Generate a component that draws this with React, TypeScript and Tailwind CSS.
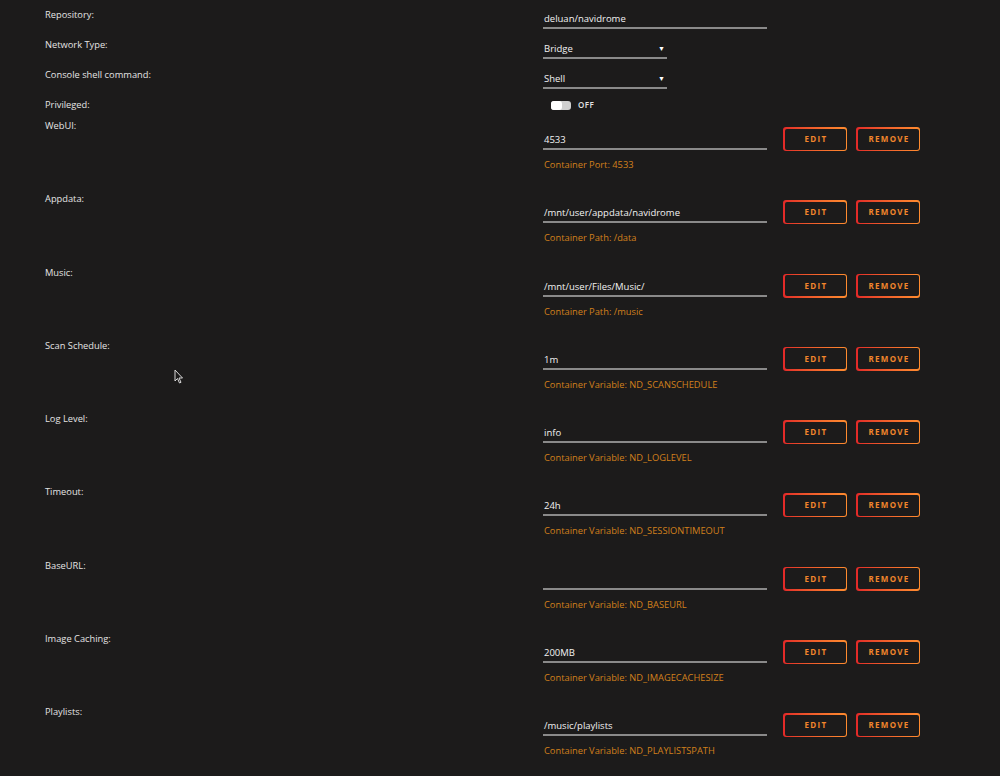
import React from "react";

const font = { fontFamily: '"Open Sans", "Liberation Sans", sans-serif' };

type Row = { label: string; value: string; desc: string };

const rows: Row[] = [
  { label: "WebUI:", value: "4533", desc: "Container Port: 4533" },
  { label: "Appdata:", value: "/mnt/user/appdata/navidrome", desc: "Container Path: /data" },
  { label: "Music:", value: "/mnt/user/Files/Music/", desc: "Container Path: /music" },
  { label: "Scan Schedule:", value: "1m", desc: "Container Variable: ND_SCANSCHEDULE" },
  { label: "Log Level:", value: "info", desc: "Container Variable: ND_LOGLEVEL" },
  { label: "Timeout:", value: "24h", desc: "Container Variable: ND_SESSIONTIMEOUT" },
  { label: "BaseURL:", value: "", desc: "Container Variable: ND_BASEURL" },
  { label: "Image Caching:", value: "200MB", desc: "Container Variable: ND_IMAGECACHESIZE" },
  { label: "Playlists:", value: "/music/playlists", desc: "Container Variable: ND_PLAYLISTSPATH" },
];

function Btn({ text }: { text: string }) {
  return (
    <div className="w-[64px] h-[24px] rounded-[3px] p-[1.5px] bg-gradient-to-r from-[#e22828] to-[#ff8c2f]">
      <div className="w-full h-full rounded-[2px] bg-[#1c1b1b] flex items-center justify-center text-[8px] font-bold tracking-[1.3px] text-[#f2862c] pl-[2px]">
        {text}
      </div>
    </div>
  );
}

function Label({ text }: { text: string }) {
  return (
    <div className="w-[543px] pl-[45px] h-4 leading-4 text-[9.3px] text-[#e4e4e4] shrink-0">{text}</div>
  );
}

function Field({ value, width }: { value: string; width: number }) {
  return (
    <div
      className="h-[20px] border-b-2 border-[#8a8a8a] text-[9.5px] leading-[19px] text-[#f2f2f2] pl-[1px]"
      style={{ width }}
    >
      {value}
    </div>
  );
}

function Select({ value }: { value: string }) {
  return (
    <div className="w-[124px] h-[20px] border-b-2 border-[#8a8a8a] text-[9.5px] leading-[19px] text-[#f2f2f2] pl-[1px] flex justify-between pr-[2px]">
      <span>{value}</span>
      <span className="text-[7px] text-white">▼</span>
    </div>
  );
}

export default function App() {
  return (
    <div className="relative w-[1000px] h-[776px] bg-[#1c1b1b] overflow-hidden pt-[7px]" style={font}>
      <div className="flex h-[30px]">
        <Label text="Repository:" />
        <div className="pt-[2px]">
          <Field value="deluan/navidrome" width={224} />
        </div>
      </div>
      <div className="flex h-[30px]">
        <Label text="Network Type:" />
        <div className="pt-[2px]">
          <Select value="Bridge" />
        </div>
      </div>
      <div className="flex h-[30px]">
        <Label text="Console shell command:" />
        <div className="pt-[2px]">
          <Select value="Shell" />
        </div>
      </div>
      <div className="flex h-[21px]">
        <Label text="Privileged:" />
        <div className="pt-[1px] pl-[8px] flex items-center gap-[7px] h-[15px]">
          <div className="relative w-[20px] h-[9px] rounded-[3px] bg-[#d0d0d0]">
            <div className="absolute left-0 top-0 w-[11px] h-[9px] rounded-[3px] bg-white" />
          </div>
          <span className="text-[8px] font-semibold text-[#e4e4e4] tracking-[0.5px]">OFF</span>
        </div>
      </div>
      {rows.map((r) => (
        <div key={r.label} className="flex h-[73.3px]">
          <Label text={r.label} />
          <div className="flex flex-col">
            <div className="flex items-start">
              <div className="pt-[12px]">
                <Field value={r.value} width={224} />
              </div>
              <div className="pt-[9px] pl-[16px] flex gap-[9px]">
                <Btn text="EDIT" />
                <Btn text="REMOVE" />
              </div>
            </div>
            <div className="text-[9.3px] leading-4 text-[#d2801c] mt-[6px] pl-[1px]">{r.desc}</div>
          </div>
        </div>
      ))}
      <svg className="absolute left-[174px] top-[369px]" width="10" height="15" viewBox="0 0 10 15">
        <path d="M1 1 L1 12 L3.5 9.5 L5.5 14 L7 13.3 L5 9 L8.5 9 Z" fill="#1c1b1b" stroke="#d8d8d8" strokeWidth="1" />
      </svg>
    </div>
  );
}
